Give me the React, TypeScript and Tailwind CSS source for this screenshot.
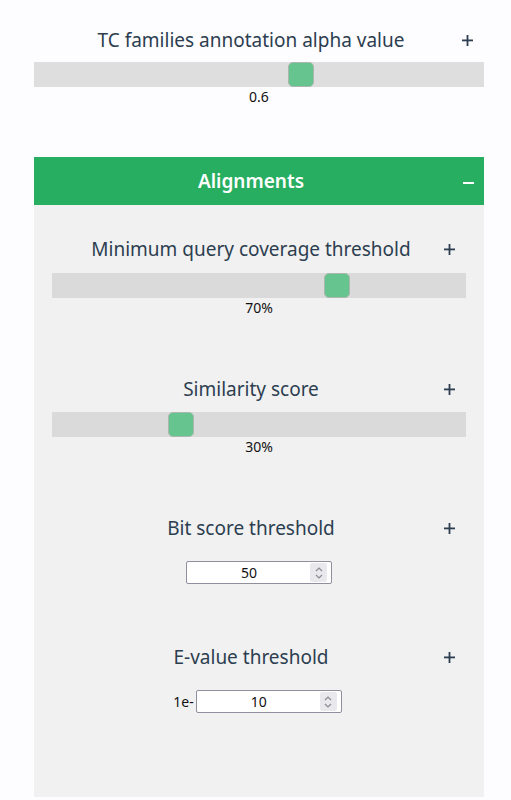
import React from "react";

const font = { fontFamily: '"Noto Sans", "Open Sans", sans-serif' };

function Plus({ color = "#2c3e50" }: { color?: string }) {
  return (
    <svg width="11" height="11" viewBox="0 0 11 11" className="block">
      <rect x="0" y="4.5" width="11" height="1.8" fill={color} />
      <rect x="4.6" y="0" width="1.8" height="11" fill={color} />
    </svg>
  );
}

function Title({ text }: { text: string }) {
  return (
    <div className="relative">
      <div className="pr-4 text-center text-[19px] leading-6 text-[#2c3e50]">{text}</div>
      <div className="absolute right-[11px] top-[7px]">
        <Plus />
      </div>
    </div>
  );
}

function Slider({ value, label, track }: { value: number; label: string; track: string }) {
  return (
    <div>
      <div className={`relative h-[25px] ${track}`}>
        <div
          className="absolute top-0 h-[25px] w-[26px] rounded-[5px] border border-[#a9b7ae] bg-[#66c48f]"
          style={{ left: `calc(${value} * (100% - 26px))` }}
        />
      </div>
      <div className="mt-[2px] text-center text-[14px] leading-4 text-[#111]">{label}</div>
    </div>
  );
}

function Spinner() {
  return (
    <div className="flex h-[19px] w-[17px] items-center justify-center rounded-[2px] bg-[#e9e9ed]">
      <svg width="10" height="14" viewBox="0 0 10 14">
        <path d="M2 5 L5 2 L8 5" stroke="#8a8a92" strokeWidth="1.2" fill="none" />
        <path d="M2 9 L5 12 L8 9" stroke="#8a8a92" strokeWidth="1.2" fill="none" />
      </svg>
    </div>
  );
}

function NumberBox({ value }: { value: string }) {
  return (
    <div className="flex h-[23px] w-[146px] items-center rounded-[2px] border border-[#8f8f9d] bg-white pl-[1px] pr-[4px]">
      <div className="flex-1 text-center text-[14px] leading-5 text-[#111]">{value}</div>
      <Spinner />
    </div>
  );
}

export default function App() {
  return (
    <div className="min-h-[800px] bg-[#fdfcfe] pt-[28px]" style={font}>
      <div className="mx-[34px] w-[450px]">
        <Title text="TC families annotation alpha value" />
        <div className="mt-[10px]">
          <Slider value={0.6} label="0.6" track="bg-[#dedede]" />
        </div>
        <div className="relative mt-[52px] flex h-[48px] items-center justify-center bg-[#27ae60]">
          <div className="pr-4 text-[19px] font-semibold text-white">Alignments</div>
          <div className="absolute right-[10px] top-[25px] h-[1.6px] w-[11px] bg-white" />
        </div>
        <div className="h-[592px] bg-[#f1f1f1] px-[18px] pt-[32px]">
          <Title text="Minimum query coverage threshold" />
          <div className="mt-[12px]">
            <Slider value={0.7} label="70%" track="bg-[#dadada]" />
          </div>
          <div className="mt-[61px]">
            <Title text="Similarity score" />
          </div>
          <div className="mt-[11px]">
            <Slider value={0.3} label="30%" track="bg-[#dadada]" />
          </div>
          <div className="mt-[61px]">
            <Title text="Bit score threshold" />
          </div>
          <div className="mt-[21px] flex justify-center">
            <NumberBox value="50" />
          </div>
          <div className="mt-[61px]">
            <Title text="E-value threshold" />
          </div>
          <div className="mt-[21px] flex items-center justify-center gap-[2px] pr-[3px]">
            <span className="text-[14px] text-[#111]">1e-</span>
            <NumberBox value="10" />
          </div>
        </div>
      </div>
    </div>
  );
}
